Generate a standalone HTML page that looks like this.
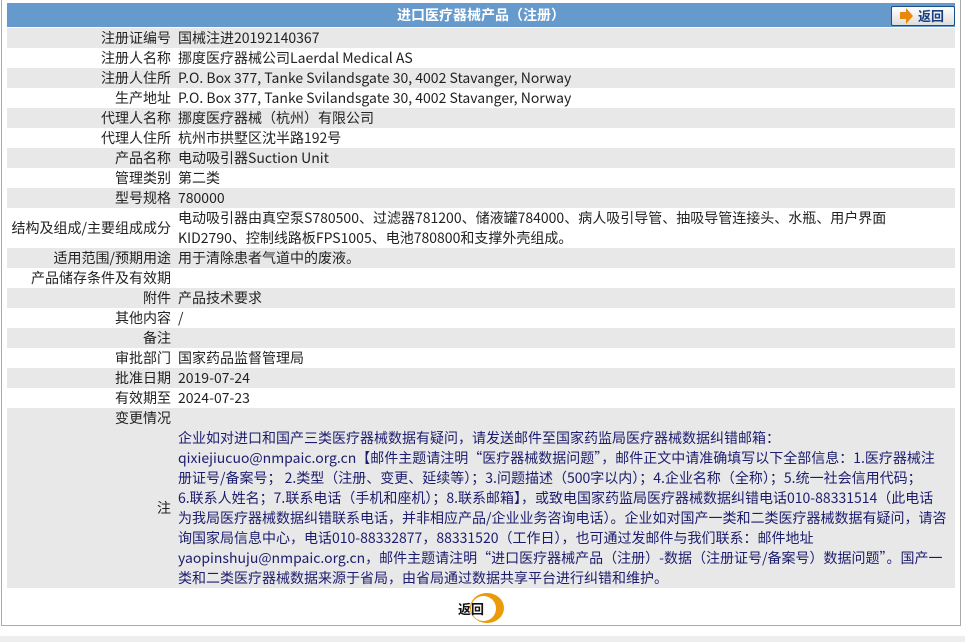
<!DOCTYPE html>
<html><head><meta charset="utf-8"><style>
body{margin:0;background:#fff;font-family:"Noto Sans CJK SC","Liberation Sans",sans-serif;font-size:14px;color:#222;width:965px;height:642px;overflow:hidden;position:relative}
.box{position:absolute;left:1px;top:0;width:958px;height:625px;border:1px solid #aaa;border-top:none}
.hd{position:absolute;left:7px;top:3px;width:948px;height:24px;background:#6699cc;color:#fff;font-weight:bold;text-align:center;line-height:24px;font-size:14px}
.btn{position:absolute;left:891px;top:6px;width:62px;height:18px;border:1px solid #1a4f8a;border-radius:2px;background:linear-gradient(#fff,#ddd);color:#1a3f80;font-weight:bold;line-height:18px;font-size:13px}
.btn i{position:absolute;left:8px;top:5px;width:6px;height:7px;background:#e8880c}
.btn b{position:absolute;left:14px;top:1px;border-left:7px solid #e8880c;border-top:8px solid transparent;border-bottom:8px solid transparent}
.btn span{position:absolute;left:26px;top:0}
table{position:absolute;left:7px;top:28px;width:948px;border-collapse:collapse}
td{padding:0;line-height:20px;height:20px;vertical-align:middle;white-space:nowrap}
td.l{width:164px;text-align:right;padding-right:7px}
td.v{padding-left:0}
tr:nth-child(odd){background:#e8e8e8}
.note{color:#1c1c6e}
.bk{position:absolute;left:458px;top:594px;font-weight:bold;font-size:13px;color:#111}
.bk .c{position:absolute;left:12px;top:-1px;width:34px;height:30px;border-radius:50%;background:#ec9a0a}
.bk .c2{position:absolute;left:13px;top:2px;width:25px;height:25px;border-radius:50%;background:#fff}
.bk span{position:relative;top:5px}
.strip{position:absolute;left:0;top:636px;width:965px;height:6px;background:#eee}
</style></head><body>
<div class="box"></div>
<div class="hd">进口医疗器械产品（注册）</div>
<div class="btn"><i></i><b></b><span>返回</span></div>
<table>
<tr><td class="l">注册证编号</td><td class="v">国械注进20192140367</td></tr>
<tr><td class="l">注册人名称</td><td class="v">挪度医疗器械公司Laerdal Medical AS</td></tr>
<tr><td class="l">注册人住所</td><td class="v">P.O. Box 377, Tanke Svilandsgate 30, 4002 Stavanger, Norway</td></tr>
<tr><td class="l">生产地址</td><td class="v">P.O. Box 377, Tanke Svilandsgate 30, 4002 Stavanger, Norway</td></tr>
<tr><td class="l">代理人名称</td><td class="v">挪度医疗器械（杭州）有限公司</td></tr>
<tr><td class="l">代理人住所</td><td class="v">杭州市拱墅区沈半路192号</td></tr>
<tr><td class="l">产品名称</td><td class="v">电动吸引器Suction Unit</td></tr>
<tr><td class="l">管理类别</td><td class="v">第二类</td></tr>
<tr><td class="l">型号规格</td><td class="v">780000</td></tr>
<tr><td class="l">结构及组成/主要组成成分</td><td class="v">电动吸引器由真空泵S780500、过滤器781200、储液罐784000、病人吸引导管、抽吸导管连接头、水瓶、用户界面<br>KID2790、控制线路板FPS1005、电池780800和支撑外壳组成。</td></tr>
<tr><td class="l">适用范围/预期用途</td><td class="v">用于清除患者气道中的废液。</td></tr>
<tr><td class="l">产品储存条件及有效期</td><td class="v"></td></tr>
<tr><td class="l">附件</td><td class="v">产品技术要求</td></tr>
<tr><td class="l">其他内容</td><td class="v">/</td></tr>
<tr><td class="l">备注</td><td class="v"></td></tr>
<tr><td class="l">审批部门</td><td class="v">国家药品监督管理局</td></tr>
<tr><td class="l">批准日期</td><td class="v">2019-07-24</td></tr>
<tr style="background:#fff"><td class="l">有效期至</td><td class="v">2024-07-23</td></tr>
<tr style="background:#e8e8e8"><td class="l">变更情况</td><td class="v"></td></tr>
<tr style="background:#e8e8e8"><td class="l" style="height:160px">注</td><td class="v note" style="vertical-align:top">企业如对进口和国产三类医疗器械数据有疑问，请发送邮件至国家药监局医疗器械数据纠错邮箱：<br>qixiejiucuo@nmpaic.org.cn【邮件主题请注明“医疗器械数据问题”，邮件正文中请准确填写以下全部信息：1.医疗器械注<br>册证号/备案号； 2.类型（注册、变更、延续等）；3.问题描述（500字以内）；4.企业名称（全称）；5.统一社会信用代码；<br>6.联系人姓名；7.联系电话（手机和座机）；8.联系邮箱】，或致电国家药监局医疗器械数据纠错电话010-88331514（此电话<br>为我局医疗器械数据纠错联系电话，并非相应产品/企业业务咨询电话）。企业如对国产一类和二类医疗器械数据有疑问，请咨<br>询国家局信息中心，电话010-88332877，88331520（工作日），也可通过发邮件与我们联系：邮件地址<br>yaopinshuju@nmpaic.org.cn，邮件主题请注明“进口医疗器械产品（注册）-数据（注册证号/备案号）数据问题”。国产一<br>类和二类医疗器械数据来源于省局，由省局通过数据共享平台进行纠错和维护。</td></tr>
</table>
<div class="bk"><div class="c"></div><div class="c2"></div><span>返回</span></div>
<div class="strip"></div>
</body></html>
